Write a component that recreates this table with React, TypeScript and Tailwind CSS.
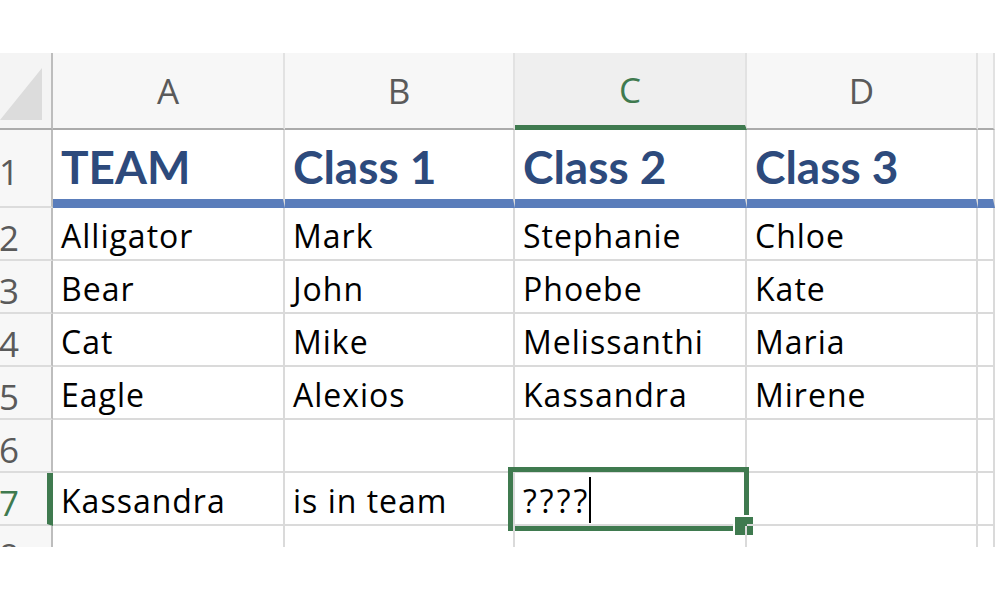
import React from "react";

const cols = ["A", "B", "C", "D", ""];

const rows: string[][] = [
  ["TEAM", "Class 1", "Class 2", "Class 3", ""],
  ["Alligator", "Mark", "Stephanie", "Chloe", ""],
  ["Bear", "John", "Phoebe", "Kate", ""],
  ["Cat", "Mike", "Melissanthi", "Maria", ""],
  ["Eagle", "Alexios", "Kassandra", "Mirene", ""],
  ["", "", "", "", ""],
  ["Kassandra", "is in team", "????", "", ""],
  ["", "", "", "", ""],
];

const body = "font-['Open_Sans',sans-serif]";

export default function App() {
  return (
    <main className="w-[1000px] h-[600px] bg-white overflow-hidden">
      <div className="h-[53px]" />

      {/* Sheet */}
      <div className="w-[995px] h-[494px] overflow-hidden">
        <div className="grid grid-cols-[53px_232px_230px_232px_231px_17px]">
          {/* Column headers */}
          <div className="relative h-[77px] bg-[#f4f4f4] border-r-2 border-b-2 border-r-[#bdbdbd] border-b-[#ababab]">
            <svg className="absolute left-0 top-[15px]" width="42" height="52" viewBox="0 0 42 52">
              <polygon points="0,52 42,0 42,52" fill="#dcdcdc" />
            </svg>
          </div>
          {cols.map((c, i) => (
            <div
              key={c + i}
              className={
                "h-[77px] flex items-center justify-center border-r-2 border-r-[#e2e2e2] " +
                (c === "C"
                  ? "bg-[#efefef] border-b-[5px] border-b-[#3f7a4f] text-[#3f7a4f]"
                  : "bg-[#f7f7f7] border-b-2 border-b-[#ababab] text-[#5a5a5a]")
              }
            >
              <span className={`${body} text-[35px] leading-none`}>{c}</span>
            </div>
          ))}

          {/* Rows */}
          {rows.map((row, r) => {
            const first = r === 0;
            const selected = r === 6;
            return (
              <React.Fragment key={r}>
                <div
                  className={
                    "flex items-end bg-[#f7f7f7] border-b-2 border-b-[#dcdcdc] " +
                    (first ? "h-[78px] pb-[17px] " : "h-[53px] pb-[4px] ") +
                    (selected
                      ? "border-r-[6px] border-r-[#3f7a4f] text-[#3f7a4f]"
                      : "border-r-2 border-r-[#bdbdbd] text-[#5a5a5a]")
                  }
                >
                  <span className={`${body} text-[35px] leading-none ml-[-1px]`}>{r + 1}</span>
                </div>
                {row.map((cell, c) => {
                  const active = selected && c === 2;
                  return (
                    <div
                      key={c}
                      className={
                        "relative flex items-end pl-[8px] border-r-2 border-r-[#dadada] " +
                        (first
                          ? "h-[78px] pb-[9px] border-b-[9px] border-b-[#5a7dbb]"
                          : "h-[53px] pb-[7px] border-b-2 border-b-[#dadada]")
                      }
                    >
                      {first ? (
                        <span className="font-['Lato',sans-serif] font-bold text-[46px] leading-none text-[#2d4a7c] whitespace-nowrap">
                          {cell}
                        </span>
                      ) : (
                        <span
                          className={
                            `${body} text-[32px] leading-none text-black whitespace-nowrap flex items-end ` +
                            (active ? "tracking-[3px]" : "tracking-[1px]")
                          }
                        >
                          {cell}
                          {active && (
                            <span className="inline-block w-[2px] h-[46px] bg-black ml-[-1px] mb-[-6px]" />
                          )}
                        </span>
                      )}
                      {active && (
                        <>
                          <div className="absolute left-[-7px] top-[-6px] w-[241px] h-[64px] border-[5px] border-[#3f7a4f]" />
                          <div className="absolute left-[218px] top-[42px] w-[22px] h-[22px] bg-[#3f7a4f] border-[2px] border-white" />
                        </>
                      )}
                    </div>
                  );
                })}
              </React.Fragment>
            );
          })}
        </div>
      </div>
    </main>
  );
}
